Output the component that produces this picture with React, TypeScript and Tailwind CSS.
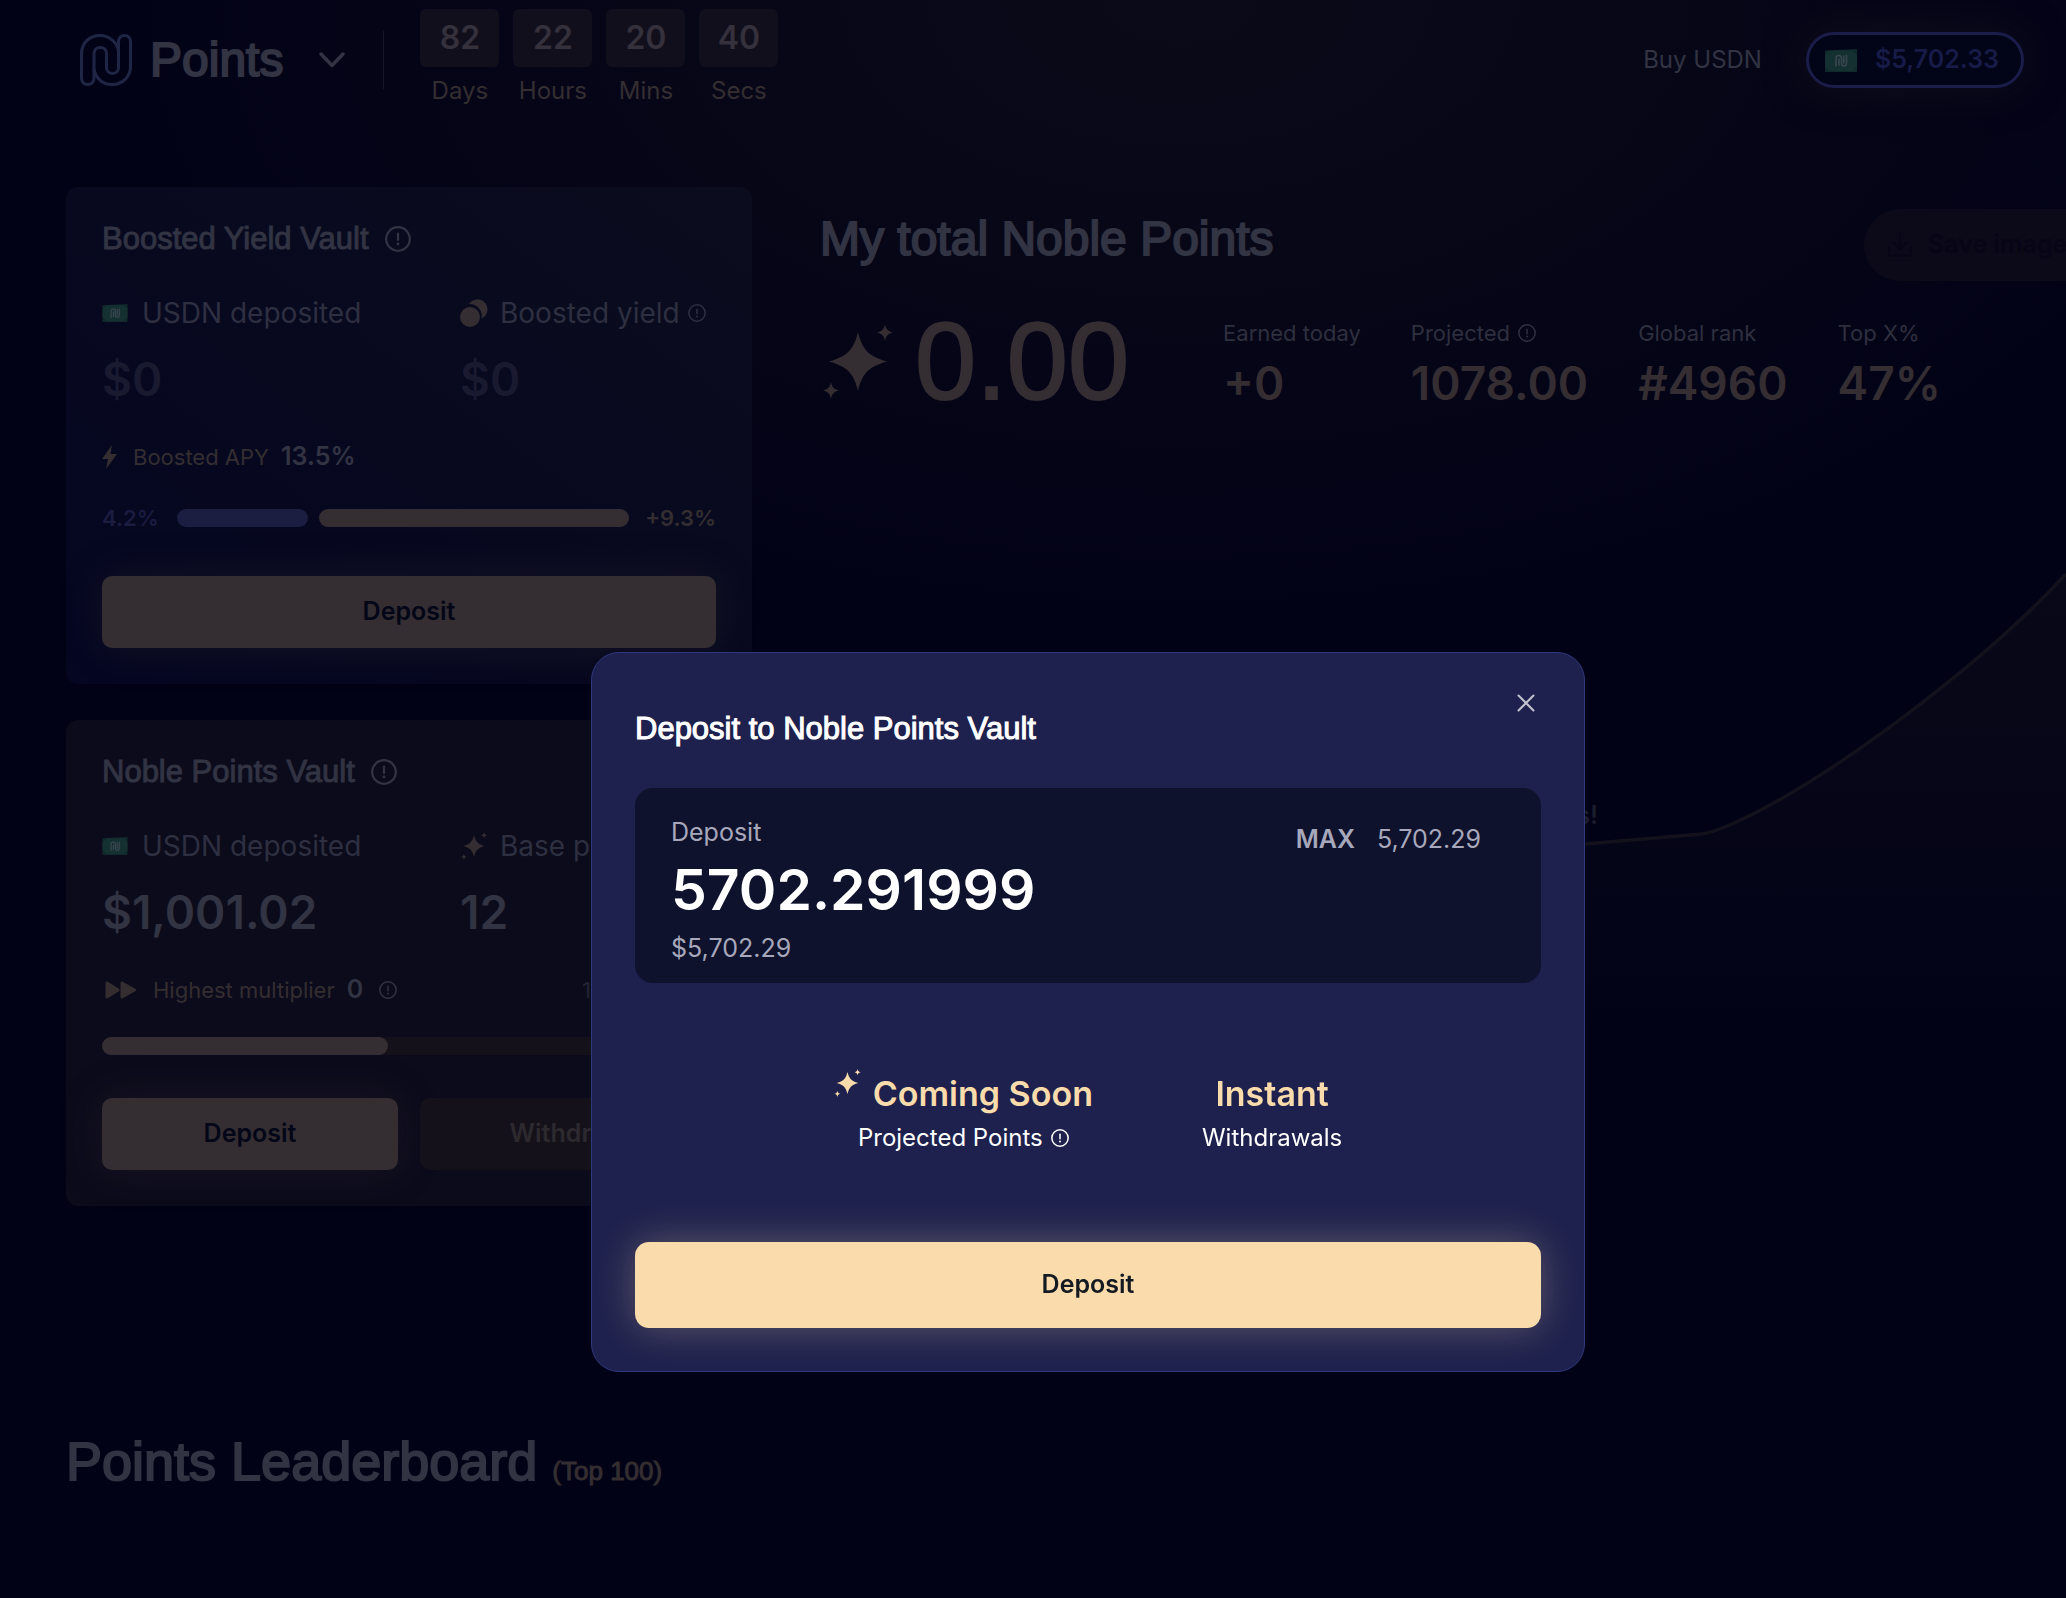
import React from "react";

const display = "font-['Liberation_Sans',Arial,sans-serif]";

function NobleMark({ className }: { className: string }) {
  return (
    <svg viewBox="0 0 52 52" fill="none" className={className} aria-hidden="true">
      <defs>
        <linearGradient id="noble-line" x1="0" y1="52" x2="52" y2="0">
          <stop offset="0" stopColor="#38394a" />
          <stop offset="0.5" stopColor="#1f2545" />
          <stop offset="1" stopColor="#1c2242" />
        </linearGradient>
      </defs>
      <path
        d="M1.500 44V20C1.500 9 9.500 1.500 20 1.500C29 1.500 37 8 38.500 17V33.500C38.500 37 36 39.500 32.500 39.500C29 39.500 26.500 37 26.500 33.500V19.500C26.500 16 24 13.500 20.300 13.500C16.500 13.500 14 16 14 19.500V44C14 48 11.500 50.500 7.700 50.500C4 50.500 1.500 48 1.500 44Z"
        stroke="url(#noble-line)"
        strokeWidth="3"
      />
      <path
        d="M38.500 18V8C38.500 4 40.800 1.500 44.500 1.500C48.200 1.500 50.500 4 50.500 8V32C50.500 43 42.500 50.500 32 50.500C23 50.500 15.500 44.500 14 35"
        stroke="url(#noble-line)"
        strokeWidth="3"
      />
    </svg>
  );
}

function Bill({ className }: { className: string }) {
  return (
    <svg viewBox="0 0 32 23" fill="none" className={className} aria-hidden="true">
      <path d="M0 1.500L32 0V23H0Z" fill="#10292b" />
      <path d="M5 1.500H27L32 6V17L27 22H5L0 17V6Z" fill="#143030" />
      <path
        d="M11 17V9.500C11 7.500 12.200 6.500 13.800 6.500C15.500 6.500 16.500 7.500 16.500 9.500V14C16.500 16 17.500 17 19 17C20.700 17 21.500 16 21.500 14V6.500M14 16V10M18.800 7V14"
        stroke="#3a4650"
        strokeWidth="1.600"
        strokeLinecap="round"
      />
    </svg>
  );
}

function Info({ className }: { className: string }) {
  return (
    <svg viewBox="0 0 26 26" fill="none" className={className} aria-hidden="true">
      <circle cx="13" cy="13" r="11.800" stroke="currentColor" strokeWidth="2.200" />
      <path d="M13 7.500V14" stroke="currentColor" strokeWidth="2.200" strokeLinecap="round" />
      <circle cx="13" cy="18" r="1.400" fill="currentColor" />
    </svg>
  );
}

function Sparkles({ className }: { className: string }) {
  return (
    <svg viewBox="0 0 70 75" fill="currentColor" className={className} aria-hidden="true">
      <path d="M35 8C39 24 44 32 64 37.500C44 43 39 51 35 67C31 51 26 43 6 37.500C26 32 31 24 35 8Z" />
      <path d="M62 0C63 5 64.500 7 70 8.500C64.500 10 63 12 62 17C61 12 59.500 10 54 8.500C59.500 7 61 5 62 0Z" />
      <path d="M8 58C9 63 10.500 65 16 66.500C10.500 68 9 70 8 75C7 70 5.500 68 0 66.500C5.500 65 7 63 8 58Z" />
    </svg>
  );
}

function Coins() {
  return (
    <svg viewBox="0 0 28 28" className="size-7 text-[#342e33]" fill="currentColor" aria-hidden="true">
      <path d="M9 5A10 10 0 1 1 21.500 19.500A12 12 0 0 0 9 5Z" />
      <circle cx="10" cy="18" r="10" />
    </svg>
  );
}

function CountBox({ value, label }: { value: string; label: string }) {
  return (
    <div className="flex w-[79px] flex-col items-center">
      <div className="flex h-[58px] w-full items-center justify-center rounded-md bg-[#110f1b] text-[32px] font-semibold text-[#34303c]">
        {value}
      </div>
      <div className="mt-2 text-[24px] leading-8 text-[#342e31]">{label}</div>
    </div>
  );
}

function Metric({ icon, label, value, dim, info }: { icon: React.ReactNode; label: string; value: string; dim?: boolean; info?: boolean }) {
  return (
    <div>
      <div className="flex h-10 items-center whitespace-nowrap text-[28px] text-[#2e2f41]">
        <span className="flex w-10 items-center">{icon}</span>
        {label}
        {info && <Info className="ml-2 size-[18px]" />}
      </div>
      <div className={`mt-4 text-[46px] font-semibold leading-[60px] ${dim ? "text-[#191a30]" : "text-[#323343]"}`}>
        {value}
      </div>
    </div>
  );
}

function Stat({ label, value, info }: { label: string; value: string; info?: boolean }) {
  return (
    <div className="whitespace-nowrap">
      <div className="flex h-8 items-center gap-2 text-[22px] text-[#2e2f3f]">
        {label}
        {info && <Info className="size-[18px]" />}
      </div>
      <div className="mt-1 text-[46px] font-semibold leading-[60px] text-[#342e33]">{value}</div>
    </div>
  );
}

const goldButton =
  "h-[72px] rounded-[10px] bg-[#342e33] text-[25px] font-semibold text-[#030617] shadow-[0_0_40px_rgba(52,46,51,0.3)]";

export default function App() {
  return (
    <div className="relative min-h-screen overflow-hidden bg-[#020217] bg-[radial-gradient(ellipse_1100px_640px_at_1180px_0px,#0b0a18,#020217)] font-['Inter',sans-serif]">
      <header className="flex h-[120px] items-center justify-between pl-20 pr-[42px]">
        <div className="flex items-center">
          <NobleMark className="size-[52px]" />
          <h1 className={`${display} ml-[18px] text-[48px] leading-none text-[#323343] [-webkit-text-stroke:2px]`}>Points</h1>
          <button aria-label="Switch section" className="ml-9 text-[#323343]">
            <svg viewBox="0 0 26 16" fill="none" className="h-4 w-[26px]">
              <path d="M2 2L13 13.500L24 2" stroke="currentColor" strokeWidth="3.500" strokeLinecap="round" strokeLinejoin="round" />
            </svg>
          </button>
          <div className="ml-[38px] h-[58px] w-px bg-[#15162a]" />
          <div className="-mt-1 ml-9 flex gap-[14px]">
            <CountBox value="82" label="Days" />
            <CountBox value="22" label="Hours" />
            <CountBox value="20" label="Mins" />
            <CountBox value="40" label="Secs" />
          </div>
        </div>
        <div className="flex items-center gap-11">
          <a href="#buy" className="text-[24px] text-[#323343]">Buy USDN</a>
          <button className="flex h-14 items-center gap-[18px] rounded-full border-3 border-[#1a1d49] bg-[#020417] pl-4 pr-[22px] text-[25px] font-semibold text-[#171b47] shadow-[0_0_40px_#110e1c]">
            <Bill className="h-[23px] w-8" />
            $5,702.33
          </button>
        </div>
      </header>

      <main className="px-[66px] pt-[67px]">
        <div className="flex">
          <div className="w-[686px] shrink-0 space-y-9">
            <section className="rounded-xl bg-[#06071f] bg-linear-to-tr from-[#050621] to-[#0b0c1d] p-9">
              <h2 className={`${display} flex h-8 items-center gap-4 text-[31px] text-[#323343] [-webkit-text-stroke:1px]`}>
                Boosted Yield Vault <Info className="size-[26px]" />
              </h2>
              <div className="mt-[38px] grid grid-cols-[358px_1fr]">
                <Metric icon={<Bill className="h-[18px] w-[26px]" />} label="USDN deposited" value="$0" dim />
                <Metric icon={<Coins />} label="Boosted yield" value="$0" dim info />
              </div>
              <div className="mt-8 flex h-8 items-center text-[22px] text-[#342e31]">
                <svg viewBox="0 0 15 24" className="h-6 w-[15px]" fill="currentColor" aria-hidden="true">
                  <path d="M10 0L0 14H6L4 24L15 9H8.500Z" />
                </svg>
                <span className="ml-4">Boosted APY</span>
                <span className="ml-3 text-[25px] font-semibold text-[#323343]">13.5%</span>
              </div>
              <div className="mt-[29px] flex h-8 items-center text-[22px] font-semibold">
                <span className="text-[#1a1c40]">4.2%</span>
                <div className="ml-[18px] mr-4 flex flex-1 gap-[11px]">
                  <div className="h-[18px] grow-[131] rounded-full bg-[#1b1e40]" />
                  <div className="h-[18px] grow-[311] rounded-full bg-[#342e33]" />
                </div>
                <span className="text-[#342e31]">+9.3%</span>
              </div>
              <button className={`${goldButton} mt-[42px] w-full`}>Deposit</button>
            </section>

            <section className="rounded-xl bg-[#0c0b1b] p-9">
              <h2 className={`${display} flex h-8 items-center gap-4 text-[31px] text-[#323343] [-webkit-text-stroke:1px]`}>
                Noble Points Vault <Info className="size-[26px]" />
              </h2>
              <div className="mt-[38px] grid grid-cols-[358px_1fr]">
                <Metric icon={<Bill className="h-[18px] w-[26px]" />} label="USDN deposited" value="$1,001.02" />
                <Metric icon={<Sparkles className="size-7 text-[#342e33]" />} label="Base points" value="12" />
              </div>
              <div className="mt-8 flex h-8 items-center text-[22px] text-[#342e31]">
                <svg viewBox="0 0 32 18" className="ml-[3px] h-[18px] w-8" fill="currentColor" stroke="currentColor" strokeWidth="3" strokeLinejoin="round" aria-hidden="true">
                  <path d="M2 2L13 9L2 16ZM17 2L29.500 9L17 16Z" />
                </svg>
                <span className="ml-4">Highest multiplier</span>
                <span className="ml-3 text-[25px] font-semibold text-[#323343]">0</span>
                <Info className="ml-4 size-[18px] text-[#323343]" />
                <span className="ml-auto w-[134px] text-[#232434]">1x</span>
              </div>
              <div className="mt-[31px] h-[18px] rounded-full bg-[#15111b]">
                <div className="h-full w-[286px] rounded-full bg-[#342e33]" />
              </div>
              <div className="mt-[43px] grid grid-cols-2 gap-[22px]">
                <button className={goldButton}>Deposit</button>
                <button className="h-[72px] rounded-[10px] bg-[#15111b] text-[25px] font-semibold text-[#2c292f]">Withdraw</button>
              </div>
            </section>
          </div>

          <section className="ml-[68px] flex-1">
            <div className="-mr-[100px] mt-[22px] flex h-[72px] items-center justify-between">
              <h2 className={`${display} -mt-3 whitespace-nowrap text-[48px] leading-[60px] text-[#323343] [-webkit-text-stroke:2px]`}>My total Noble Points</h2>
              <button className="flex h-[72px] w-[236px] items-center gap-4 whitespace-nowrap rounded-full bg-[#0c0a18] pl-6 text-[25px] font-semibold text-[#070516]">
                <svg viewBox="0 0 24 24" fill="none" className="size-6 shrink-0" stroke="currentColor" strokeWidth="2.400" strokeLinecap="round" strokeLinejoin="round">
                  <path d="M12 1V15M6 10L12 16L18 10M1 15V21C1 22 2 23 3 23H21C22 23 23 22 23 21V15" />
                </svg>
                Save image
              </button>
            </div>
            <div className="mt-7 flex items-center pl-[3px]">
              <Sparkles className="h-[75px] w-[70px] text-[#342e33]" />
              <span className={`${display} ml-[22px] text-[110px] leading-[96px] text-[#342e33] [-webkit-text-stroke:2px]`}>0.00</span>
              <div className="ml-[94px] flex gap-[50px] pt-2">
                <Stat label="Earned today" value="+0" />
                <Stat label="Projected" value="1078.00" info />
                <Stat label="Global rank" value="#4960" />
                <Stat label="Top X%" value="47%" />
              </div>
            </div>
            <div className="relative -mr-[66px] mt-[154px] h-[480px]">
              <svg viewBox="0 0 1246 480" preserveAspectRatio="none" className="size-full" fill="none" aria-hidden="true">
                <defs>
                  <linearGradient id="area" x1="0" y1="0" x2="0" y2="1">
                    <stop offset="0" stopColor="#090818" />
                    <stop offset="0.600" stopColor="#050518" />
                    <stop offset="1" stopColor="#020217" />
                  </linearGradient>
                </defs>
                <path d="M0 311L765 277L882 267Q890 266 905 260C1000 220 1160 100 1246 7V480H0Z" fill="url(#area)" />
                <path d="M0 311L765 277L882 267Q890 266 905 260C1000 220 1160 100 1246 7" stroke="#13111c" strokeWidth="3.500" />
              </svg>
              <p className="absolute right-[468px] top-[230px] text-[25px] font-semibold text-[#1c1d2c]">points!</p>
            </div>
          </section>
        </div>
        <h2 className={`${display} mt-[219px] text-[54px] leading-[72px] text-[#323343] [-webkit-text-stroke:2px]`}>
          Points Leaderboard <span className="text-[26px] text-[#342e31] [-webkit-text-stroke:1px]">(Top 100)</span>
        </h2>
      </main>

      <div className="fixed inset-0 flex items-start justify-center pl-[110px] pt-[652px]">
        <div role="dialog" aria-labelledby="deposit-title" className="relative w-full max-w-[994px] rounded-[28px] border border-[#2f387c] bg-[#1e214d] px-[43px] pb-[43px] pt-[58px]">
          <button aria-label="Close" className="absolute right-[47px] top-[39px] p-[2px] text-[#c3c4d0]">
            <svg viewBox="0 0 18 18" fill="none" className="size-[18px]" stroke="currentColor" strokeWidth="2" strokeLinecap="round">
              <path d="M1.500 1.500L16.500 16.500M16.500 1.500L1.500 16.500" />
            </svg>
          </button>
          <h2 id="deposit-title" className={`${display} text-[31px] leading-9 text-white [-webkit-text-stroke:1px]`}>Deposit to Noble Points Vault</h2>
          <div className="mt-[41px] flex h-[195px] items-start justify-between rounded-[18px] bg-[#0f122d] pl-9 pr-[60px] pt-7">
            <div className="flex flex-col text-[25px] text-[#a7a8bb]">
              <label htmlFor="amount" className="leading-8">Deposit</label>
              <input
                id="amount"
                defaultValue="5702.291999"
                className="my-1 h-[76px] w-[480px] bg-transparent text-[57px] font-semibold text-white outline-none"
              />
              <span className="leading-8">$5,702.29</span>
            </div>
            <div className="mt-[7px] flex gap-[22px] text-[25px] leading-8 text-[#a7a8bb]">
              <button className="font-semibold">MAX</button>
              <span>5,702.29</span>
            </div>
          </div>
          <div className="mt-[83px] flex justify-center gap-[109px] text-center text-[24px] leading-8 text-white">
            <div>
              <div className="flex items-start gap-3 text-[34px] font-semibold leading-[56px] text-[#fadbab]">
                <Sparkles className="mt-[3px] h-7 w-[27px]" />
                Coming Soon
              </div>
              <div className="flex items-center justify-center gap-2">
                Projected Points <Info className="size-[18px]" />
              </div>
            </div>
            <div>
              <div className="text-[34px] font-semibold leading-[56px] text-[#fadbab]">Instant</div>
              Withdrawals
            </div>
          </div>
          <button className="mt-[88px] h-[86px] w-full rounded-[14px] bg-[#fadbab] text-[25px] font-semibold text-[#141a22] shadow-[0_0_40px_rgba(250,219,171,0.3)]">
            Deposit
          </button>
        </div>
      </div>
    </div>
  );
}
